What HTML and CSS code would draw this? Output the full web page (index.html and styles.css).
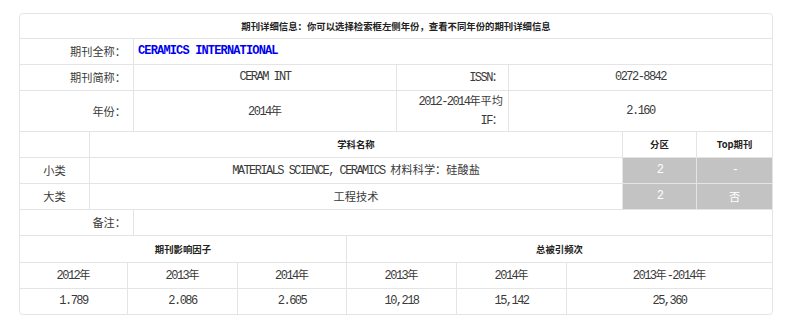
FILE: index.html
```html
<!DOCTYPE html>
<html lang="zh-CN">
<head>
<meta charset="utf-8">
<title>期刊详细信息</title>
<link rel="stylesheet" href="styles.css">
</head>
<body>
<div class="card">
  <div class="cell title">期刊详细信息：你可以选择检索框左侧年份，查看不同年份的期刊详细信息</div>

  <div class="info">
    <div class="cell lbl">期刊全称：</div>
    <div class="cell left span3"><a class="jname" href="#">CERAMICS INTERNATIONAL</a></div>
    <div class="cell lbl">期刊简称：</div>
    <div class="cell"><span class="en">CERAM INT</span></div>
    <div class="cell lbl2"><span><span class="en">ISSN</span>：</span></div>
    <div class="cell"><span class="en">0272-8842</span></div>
    <div class="cell lbl">年份：</div>
    <div class="cell"><span><span class="en">2014</span>年</span></div>
    <div class="cell lbl2 multi"><span><span class="en">2012-2014</span>年平均<br><span class="en">IF</span>：</span></div>
    <div class="cell"><span class="en">2.160</span></div>
  </div>

  <div class="subj">
    <div class="cell hd"></div>
    <div class="cell hd">学科名称</div>
    <div class="cell hd">分区</div>
    <div class="cell hd">Top期刊</div>
    <div class="cell">小类</div>
    <div class="cell"><span><span class="en">MATERIALS SCIENCE, CERAMICS </span>材料科学：硅酸盐</span></div>
    <div class="cell gray"><span class="en">2</span></div>
    <div class="cell gray"><span class="en">-</span></div>
    <div class="cell">大类</div>
    <div class="cell">工程技术</div>
    <div class="cell gray"><span class="en">2</span></div>
    <div class="cell gray">否</div>
  </div>

  <div class="note">
    <div class="cell lbl">备注：</div>
    <div class="cell"></div>
  </div>

  <div class="stats">
    <div class="cell hd span3">期刊影响因子</div>
    <div class="cell hd span3">总被引频次</div>
    <div class="cell"><span><span class="en">2012</span>年</span></div>
    <div class="cell"><span><span class="en">2013</span>年</span></div>
    <div class="cell"><span><span class="en">2014</span>年</span></div>
    <div class="cell"><span><span class="en">2013</span>年</span></div>
    <div class="cell"><span><span class="en">2014</span>年</span></div>
    <div class="cell"><span><span class="en">2013</span>年<span class="en">-2014</span>年</span></div>
    <div class="cell"><span class="en">1.789</span></div>
    <div class="cell"><span class="en">2.086</span></div>
    <div class="cell"><span class="en">2.605</span></div>
    <div class="cell"><span class="en">10,218</span></div>
    <div class="cell"><span class="en">15,142</span></div>
    <div class="cell"><span class="en">25,360</span></div>
  </div>
</div>
</body>
</html>
```

FILE: styles.css
```css
html, body {
  margin: 0;
  background: #fff;
}

body {
  padding: 13px 0 0 19px;
  font-family: "Noto Sans CJK SC", sans-serif;
  font-size: 11.2px;
  color: #3a3a3a;
}

.card {
  width: 752px;
  border: 1px solid #e4e4e4;
  border-radius: 4px;
  overflow: hidden;
  display: flex;
  flex-direction: column;
  gap: 1px;
  background: #e4e4e4;
}

.cell {
  background: #fff;
  display: flex;
  align-items: center;
  justify-content: center;
  line-height: 17px;
  white-space: nowrap;
}

.en {
  font-family: "Liberation Mono", monospace;
  font-size: 12px;
  letter-spacing: -1.55px;
}

.title {
  height: 24px;
  font-size: 9.4px;
  font-weight: bold;
  color: #222;
}

.info {
  display: grid;
  grid-template-columns: 113px 262px 111px 263px;
  grid-template-rows: 25px 25px 40px;
  gap: 1px;
}

.span3 {
  grid-column: span 3;
}

.lbl {
  justify-content: flex-end;
  padding-right: 7px;
}

.lbl2 {
  justify-content: flex-end;
  padding-right: 5px;
}

.multi > span {
  text-align: right;
}

.left {
  justify-content: flex-start;
  padding-left: 4px;
}

.jname {
  font-family: "Liberation Mono", monospace;
  font-size: 12px;
  font-weight: bold;
  letter-spacing: -0.85px;
  color: #0000f0;
  text-decoration: none;
}

.subj {
  display: grid;
  grid-template-columns: 69px 532px 73px 75px;
  grid-template-rows: 25px 25px 25px;
  gap: 1px;
}

.hd {
  font-size: 9.4px;
  font-weight: bold;
  color: #222;
}

.gray {
  background: #c3c3c3;
  color: #fff;
}

.note {
  display: grid;
  grid-template-columns: 113px 638px;
  grid-template-rows: 25px;
  gap: 1px;
}

.stats {
  display: grid;
  grid-template-columns: 107px 109px 108px 109px 109px 205px;
  grid-template-rows: 26px 25px 25px;
  gap: 1px;
}

.stats .hd.span3:first-child {
  grid-column: 1 / 4;
}

.stats .hd.span3:nth-child(2) {
  grid-column: 4 / 7;
}
```
